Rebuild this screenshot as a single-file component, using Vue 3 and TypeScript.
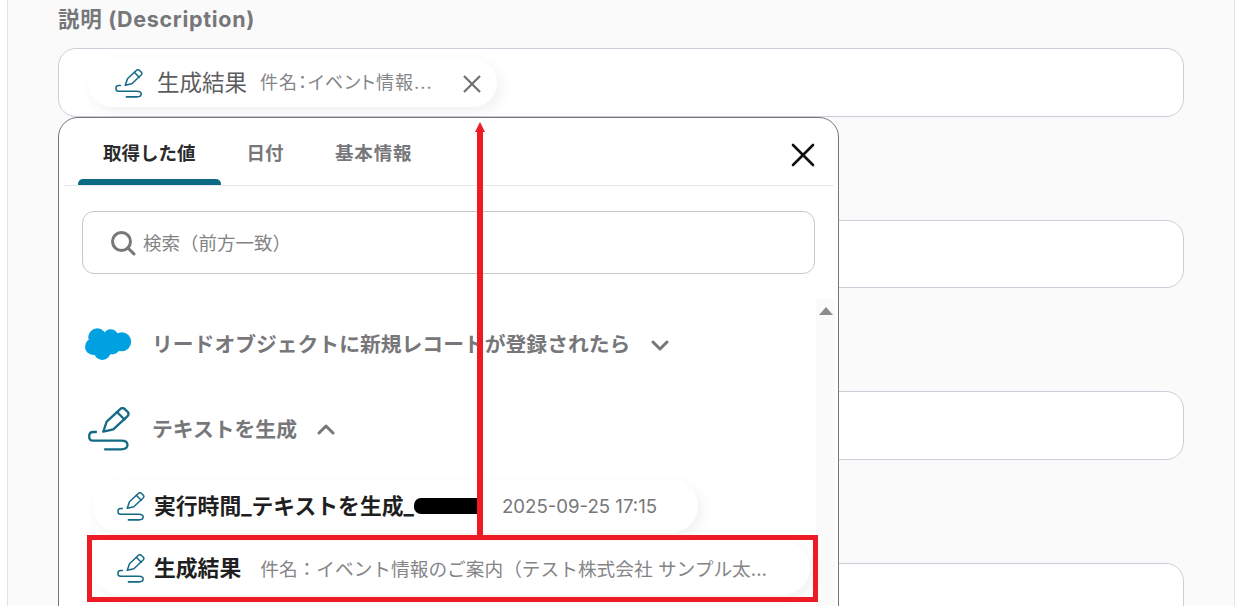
<script setup lang="ts">
const tabs = [
  { label: '取得した値', active: true },
  { label: '日付', active: false },
  { label: '基本情報', active: false },
]
</script>

<template>
  <div class="page">
    <main class="panel">
      <div class="label">説明 (Description)</div>
      <div class="field first"></div>
      <div class="field second"></div>
      <div class="field third"></div>
      <div class="field fourth"></div>

      <div class="chip selected">
        <svg class="pen" viewBox="0 0 42 44" width="28" height="29"><use href="#pen-icon" /></svg>
        <span class="chip-name">生成結果</span>
        <span class="chip-value">件名：イベント情報...</span>
        <svg class="chip-close" viewBox="0 0 20 20" width="20" height="20">
          <path d="M2 2 L18 18 M18 2 L2 18" />
        </svg>
      </div>

      <section class="popup">
        <header class="tabs">
          <div v-for="t in tabs" :key="t.label" class="tab" :class="{ active: t.active }">{{ t.label }}</div>
          <svg class="popup-close" viewBox="0 0 24 24" width="24" height="24">
            <path d="M2 2 L22 22 M22 2 L2 22" />
          </svg>
        </header>

        <div class="search">
          <svg viewBox="0 0 26 26" width="26" height="26" class="search-icon">
            <circle cx="11.5" cy="11.5" r="9" />
            <path d="M18 18 L24 24" />
          </svg>
          <span>検索（前方一致）</span>
        </div>

        <div class="scroll-track"><i></i></div>

        <div class="group salesforce">
          <svg class="cloud" viewBox="0 0 48 34" width="48" height="34">
            <circle cx="13.3" cy="10.3" r="9" />
            <circle cx="26.7" cy="10.3" r="8" />
            <circle cx="37.7" cy="14.7" r="9.5" />
            <circle cx="9.3" cy="19.7" r="8.3" />
            <circle cx="18.3" cy="24.7" r="8.3" />
            <circle cx="28" cy="19" r="8.5" />
            <circle cx="20" cy="16" r="8" />
          </svg>
          <span>リードオブジェクトに新規レコードが登録されたら</span>
          <svg class="chev" viewBox="0 0 18 12" width="18" height="12"><path d="M2 2 L9 9 L16 2" /></svg>
        </div>

        <div class="group text">
          <svg class="pen big" viewBox="0 0 42 44" width="42" height="44"><use href="#pen-icon" /></svg>
          <span>テキストを生成</span>
          <svg class="chev" viewBox="0 0 18 12" width="18" height="12"><path d="M2 10 L9 3 L16 10" /></svg>
        </div>

        <div class="row run">
          <svg class="pen" viewBox="0 0 42 44" width="28" height="29"><use href="#pen-icon" /></svg>
          <b>実行時間_テキストを生成_</b>
          <i class="mask"></i>
          <span class="time">2025-09-25 17:15</span>
        </div>
        <div class="row result">
          <svg class="pen" viewBox="0 0 42 44" width="28" height="29"><use href="#pen-icon" /></svg>
          <b>生成結果</b>
          <span class="result-value">件名：イベント情報のご案内（テスト株式会社 サンプル太...</span>
        </div>
      </section>

      <div class="mark-line"></div>
      <div class="mark-head"></div>
      <div class="mark-box"></div>
    </main>

    <svg class="defs" width="0" height="0">
      <defs>
        <g id="pen-icon" fill="none" stroke="#136a85" stroke-width="2.3" stroke-linecap="round" stroke-linejoin="round">
          <path d="M15.3 24.7 L18.7 14.7 L32.5 1.8 Q34.5 0.4 36.5 1.8 L39.8 5 Q41.3 7 39.8 8.8 L25.3 22.3 Z" />
          <path d="M29 5 L36.5 12.5" />
          <path d="M8 25 H5 Q1.2 25 1.2 29.4 Q1.2 33.7 5 33.7 H33 Q39.5 33.7 39.5 38 Q39.5 42.3 33 42.3 H17" />
        </g>
      </defs>
    </svg>
  </div>
</template>

<style>
html, body { margin: 0; background: #fff; overflow: hidden; }
</style>

<style scoped>
.page {
  width: 1238px;
  height: 606px;
  overflow: hidden;
  font-family: Inter, "Noto Sans CJK JP", sans-serif;
  background: #fff;
}
.panel {
  position: relative;
  box-sizing: border-box;
  margin-left: 7px;
  width: 1228px;
  height: 606px;
  padding: 0 50px;
  background: #fafafb;
  border-left: 1px solid #e4e4e7;
  border-right: 1px solid #e4e4e7;
}
.label {
  height: 48px;
  padding-top: 7px;
  box-sizing: border-box;
  font-size: 21.5px;
  line-height: 25px;
  letter-spacing: 0.7px;
  font-weight: 700;
  color: #77777a;
}
.field {
  box-sizing: border-box;
  width: 1126px;
  height: 69px;
  background: #fff;
  border: 1px solid #c9ced8;
  border-radius: 18px;
}
.second { margin-top: 103px; height: 68px; }
.third { margin-top: 103px; }
.fourth { margin-top: 103px; }

.chip {
  position: absolute;
  left: 80px;
  top: 59px;
  width: 409px;
  height: 48px;
  box-sizing: border-box;
  display: flex;
  align-items: center;
  padding-left: 27px;
  background: #fff;
  border-radius: 24px;
  box-shadow: 4px 5px 14px rgba(0, 0, 0, 0.06);
}
.chip-name { margin-left: 14px; padding-bottom: 4px; font-size: 22.5px; color: #5d5d60; }
.chip-value { margin-left: 13px; padding-bottom: 4px; font-size: 18px; color: #858588; font-feature-settings: "palt"; letter-spacing: 1px; }
.chip-close { position: absolute; left: 374px; top: 15px; fill: none; stroke: #707073; stroke-width: 2.2; }

.popup {
  position: absolute;
  left: 50px;
  top: 117px;
  width: 781px;
  height: 520px;
  box-sizing: border-box;
  background: #fff;
  border: 1px solid #77777a;
  border-radius: 20px;
}
.tabs {
  position: relative;
  display: flex;
  height: 67px;
  margin: 0 4px 0 5px;
  padding-left: 14px;
  border-bottom: 1px solid #e5e7ea;
}
.tab {
  padding: 0 25px;
  line-height: 70px;
  font-size: 18.5px;
  font-weight: 700;
  color: #77777a;
  position: relative;
}
.tab:nth-child(2) { padding-left: 26px; padding-right: 26.5px; }
.tab:nth-child(3) { letter-spacing: 0.8px; }
.tab.active { color: #2b2b2e; }
.tab.active::after {
  content: '';
  position: absolute;
  left: 0;
  right: 0;
  bottom: 0;
  height: 6px;
  background: #0c6a84;
  border-radius: 5px 5px 0 0;
}
.popup-close {
  position: absolute;
  right: 19px;
  top: 25px;
  fill: none;
  stroke: #111;
  stroke-width: 2.6;
  stroke-linecap: round;
}
.search {
  box-sizing: border-box;
  display: flex;
  align-items: center;
  gap: 7px;
  width: 733px;
  height: 63px;
  margin: 25px 0 0 23px;
  padding-left: 27px;
  border: 1px solid #c8c8ca;
  border-radius: 12px;
  font-size: 18.5px;
  color: #838386;
}
.search span { padding-bottom: 2px; }
.search-icon { fill: none; stroke: #777; stroke-width: 3; stroke-linecap: round; }
.scroll-track {
  position: absolute;
  right: 3px;
  top: 181px;
  width: 19px;
  bottom: 0;
  background: #fafafa;
}
.scroll-track i {
  position: absolute;
  left: 3px;
  top: 8px;
  border: 7px solid transparent;
  border-top: 0;
  border-bottom: 8px solid #8c8c8c;
}
.group {
  display: flex;
  align-items: center;
  font-size: 20.8px;
  font-weight: 700;
  color: #77777a;
  position: absolute;
}
.group span { padding-bottom: 2px; }
.salesforce { left: 25px; top: 209px; }
.salesforce span { margin-left: 20px; }
.salesforce .chev { margin-left: 21px; margin-top: 3px; }
.cloud { fill: #00a1e0; }
.text { left: 29px; top: 289px; }
.text span { margin-left: 22px; padding-bottom: 3px; }
.text .chev { margin-left: 20px; }
.chev { fill: none; stroke: #77777a; stroke-width: 3; stroke-linecap: round; stroke-linejoin: round; }
.row {
  position: absolute;
  left: 34px;
  display: flex;
  align-items: center;
  box-sizing: border-box;
  height: 54px;
  padding-left: 24px;
  background: #fff;
  border-radius: 27px;
  box-shadow: 4px 5px 14px rgba(0, 0, 0, 0.06);
}
.row b { margin-left: 9px; padding-bottom: 3px; font-size: 21.8px; color: #1f1f22; font-weight: 700; white-space: nowrap; }
.run { top: 361px; width: 605px; }
.mask { width: 66px; height: 16px; background: #000; border-radius: 7px 0 0 7px; margin-bottom: 1px; }
.time { position: absolute; left: 409px; padding-bottom: 1px; font-size: 18.6px; color: #77777a; }
.result { top: 423px; width: 717px; }
.result-value { margin-left: 19px; font-size: 18.7px; color: #858588; white-space: nowrap; padding-bottom: 2px; }
.mark-line {
  position: absolute;
  left: 469px;
  top: 130px;
  width: 6px;
  height: 406px;
  background: #ed1c24;
}
.mark-head {
  position: absolute;
  left: 467px;
  top: 122px;
  border: 5.5px solid transparent;
  border-top: 0;
  border-bottom: 10px solid #ed1c24;
}
.mark-box {
  position: absolute;
  left: 79px;
  top: 535px;
  width: 731px;
  height: 67px;
  box-sizing: border-box;
  border: 5px solid #ed1c24;
}
.defs { position: absolute; }
</style>
